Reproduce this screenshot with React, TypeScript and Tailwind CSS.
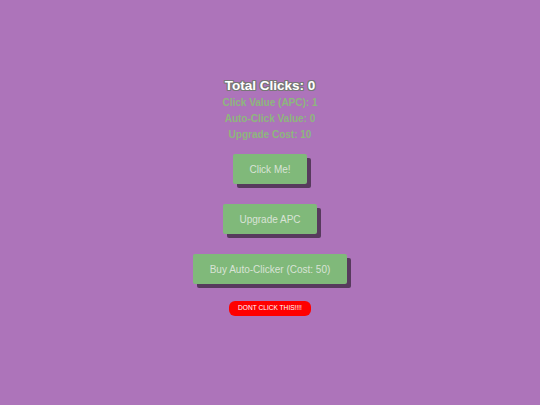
import { useState } from "react";

export default function App() {
  const [clicks, setClicks] = useState(0);
  const [apc, setApc] = useState(1);
  const [auto, setAuto] = useState(0);
  const [cost, setCost] = useState(10);

  const btn =
    "whitespace-nowrap rounded-[2px] bg-[#80b97a] px-[16.5px] h-[30px] text-[10px] text-[#d9e3d6] shadow-[4px_4px_0_#573a5d]";

  return (
    <div className="flex min-h-[405px] w-full flex-col items-center bg-[#ad74ba] pt-[77px] font-['Liberation_Sans',Arial,sans-serif]">
      {/* Stats */}
      <h1 className="text-[13.5px] font-bold leading-[18px] text-white [text-shadow:-1px_-1px_0_#777,1px_-1px_0_#777,-1px_1px_0_#777,1px_1px_0_#777,0_1px_0_#777,0_-1px_0_#777,1px_0_0_#777,-1px_0_0_#777]">
        Total Clicks: {clicks}
      </h1>
      <div className="flex flex-col items-center text-[10px] font-bold leading-[16px] text-[#8db77d]">
        <p>Click Value (APC): {apc}</p>
        <p>Auto-Click Value: {auto}</p>
        <p>Upgrade Cost: {cost}</p>
      </div>

      {/* Buttons */}
      <button onClick={() => setClicks(clicks + apc)} className={`${btn} mt-[11px]`}>
        Click Me!
      </button>
      <button
        onClick={() => {
          if (clicks >= cost) {
            setClicks(clicks - cost);
            setApc(apc + 1);
            setCost(cost * 2);
          }
        }}
        className={`${btn} mt-[20px]`}
      >
        Upgrade APC
      </button>
      <button onClick={() => setAuto(auto)} className={`${btn} mt-[20px]`}>
        Buy Auto-Clicker (Cost: 50)
      </button>
      <button className="mt-[17px] h-[15px] whitespace-nowrap rounded-[6px] bg-[#ff0000] px-[9px] text-[6.6px] leading-none text-white">
        DONT CLICK THIS!!!!
      </button>
    </div>
  );
}
